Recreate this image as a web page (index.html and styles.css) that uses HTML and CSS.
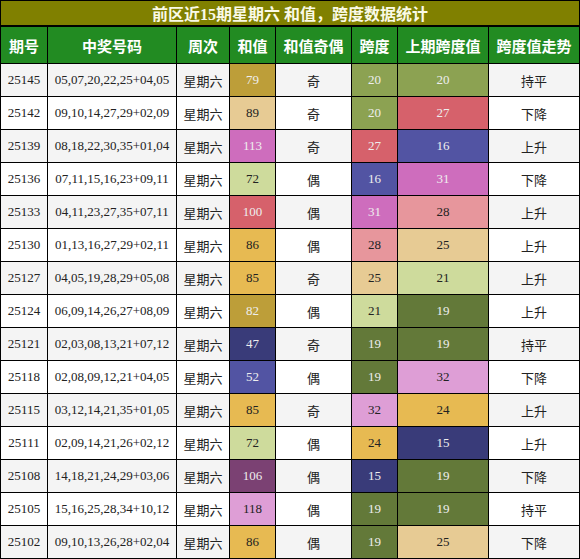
FILE: index.html
```html
<!DOCTYPE html>
<html lang="zh">
<head>
<meta charset="utf-8">
<link rel="stylesheet" href="styles.css">
</head>
<body>
<div class="grid">
  <div class="title">前区近15期星期六 和值，跨度数据统计</div>
  <div class="th">期号</div><div class="th">中奖号码</div><div class="th">周次</div><div class="th">和值</div><div class="th">和值奇偶</div><div class="th">跨度</div><div class="th">上期跨度值</div><div class="th">跨度值走势</div>

  <div class="td g">25145</div><div class="td g">05,07,20,22,25+04,05</div><div class="td g">星期六</div><div class="td c-bd9e39 lt">79</div><div class="td g">奇</div><div class="td c-8ca252 lt">20</div><div class="td c-8ca252 lt">20</div><div class="td g">持平</div>
  <div class="td">25142</div><div class="td">09,10,14,27,29+02,09</div><div class="td">星期六</div><div class="td c-e7cb94">89</div><div class="td">奇</div><div class="td c-8ca252 lt">20</div><div class="td c-d6616b lt">27</div><div class="td">下降</div>
  <div class="td g">25139</div><div class="td g">08,18,22,30,35+01,04</div><div class="td g">星期六</div><div class="td c-ce6dbd lt">113</div><div class="td g">奇</div><div class="td c-d6616b lt">27</div><div class="td c-5254a3 lt">16</div><div class="td g">上升</div>
  <div class="td">25136</div><div class="td">07,11,15,16,23+09,11</div><div class="td">星期六</div><div class="td c-cedb9c">72</div><div class="td">偶</div><div class="td c-5254a3 lt">16</div><div class="td c-ce6dbd lt">31</div><div class="td">下降</div>
  <div class="td g">25133</div><div class="td g">04,11,23,27,35+07,11</div><div class="td g">星期六</div><div class="td c-d6616b lt">100</div><div class="td g">偶</div><div class="td c-ce6dbd lt">31</div><div class="td c-e7969c">28</div><div class="td g">上升</div>
  <div class="td">25130</div><div class="td">01,13,16,27,29+02,11</div><div class="td">星期六</div><div class="td c-e7ba52">86</div><div class="td">偶</div><div class="td c-e7969c">28</div><div class="td c-e7cb94">25</div><div class="td">上升</div>
  <div class="td g">25127</div><div class="td g">04,05,19,28,29+05,08</div><div class="td g">星期六</div><div class="td c-e7ba52">85</div><div class="td g">奇</div><div class="td c-e7cb94">25</div><div class="td c-cedb9c">21</div><div class="td g">上升</div>
  <div class="td">25124</div><div class="td">06,09,14,26,27+08,09</div><div class="td">星期六</div><div class="td c-bd9e39 lt">82</div><div class="td">偶</div><div class="td c-cedb9c">21</div><div class="td c-637939 lt">19</div><div class="td">上升</div>
  <div class="td g">25121</div><div class="td g">02,03,08,13,21+07,12</div><div class="td g">星期六</div><div class="td c-393b79 lt">47</div><div class="td g">奇</div><div class="td c-637939 lt">19</div><div class="td c-637939 lt">19</div><div class="td g">持平</div>
  <div class="td">25118</div><div class="td">02,08,09,12,21+04,05</div><div class="td">星期六</div><div class="td c-5254a3 lt">52</div><div class="td">偶</div><div class="td c-637939 lt">19</div><div class="td c-de9ed6">32</div><div class="td">下降</div>
  <div class="td g">25115</div><div class="td g">03,12,14,21,35+01,05</div><div class="td g">星期六</div><div class="td c-e7ba52">85</div><div class="td g">奇</div><div class="td c-de9ed6">32</div><div class="td c-e7ba52">24</div><div class="td g">上升</div>
  <div class="td">25111</div><div class="td">02,09,14,21,26+02,12</div><div class="td">星期六</div><div class="td c-cedb9c">72</div><div class="td">偶</div><div class="td c-e7ba52">24</div><div class="td c-393b79 lt">15</div><div class="td">上升</div>
  <div class="td g">25108</div><div class="td g">14,18,21,24,29+03,06</div><div class="td g">星期六</div><div class="td c-7b4173 lt">106</div><div class="td g">偶</div><div class="td c-393b79 lt">15</div><div class="td c-637939 lt">19</div><div class="td g">下降</div>
  <div class="td">25105</div><div class="td">15,16,25,28,34+10,12</div><div class="td">星期六</div><div class="td c-de9ed6">118</div><div class="td">偶</div><div class="td c-637939 lt">19</div><div class="td c-637939 lt">19</div><div class="td">持平</div>
  <div class="td g">25102</div><div class="td g">09,10,13,26,28+02,04</div><div class="td g">星期六</div><div class="td c-e7ba52">86</div><div class="td g">偶</div><div class="td c-637939 lt">19</div><div class="td c-e7cb94">25</div><div class="td g">下降</div>
</div>
</body>
</html>
```
FILE: styles.css
```css
html, body {
  margin: 0;
  padding: 0;
  background: #fff;
}
.grid {
  display: grid;
  grid-template-columns: 47px 129px 53px 46px 76px 46px 91px 91px;
  grid-template-rows: 26px 37px repeat(15, 33px);
  width: 579px;
  border-left: 1px solid #000;
  border-top: 1px solid #000;
  font-family: "Liberation Serif", "Noto Sans CJK SC", serif;
  font-size: 13px;
  color: #222;
}
.title {
  grid-column: 1 / -1;
  background: #808000;
  color: #fafae6;
  font-weight: bold;
  font-size: 16px;
  display: flex;
  align-items: center;
  justify-content: center;
  border-right: 1px solid #000;
  border-bottom: 2px solid #000;
}
.th {
  background: #228b22;
  color: #fff;
  font-weight: bold;
  font-size: 15px;
  display: flex;
  align-items: center;
  justify-content: center;
  border-right: 1px solid #000;
  border-bottom: 1px solid #000;
}
.td {
  display: flex;
  align-items: center;
  justify-content: center;
  border-right: 1px solid #000;
  border-bottom: 1px solid #000;
  background: #fff;
}
.td.g { background: #f4f4f4; }
.lt { color: #eee; }
.c-bd9e39 { background: #bd9e39 !important; }
.c-8ca252 { background: #8ca252 !important; }
.c-e7cb94 { background: #e7cb94 !important; }
.c-d6616b { background: #d6616b !important; }
.c-ce6dbd { background: #ce6dbd !important; }
.c-5254a3 { background: #5254a3 !important; }
.c-cedb9c { background: #cedb9c !important; }
.c-e7969c { background: #e7969c !important; }
.c-e7ba52 { background: #e7ba52 !important; }
.c-637939 { background: #637939 !important; }
.c-393b79 { background: #393b79 !important; }
.c-de9ed6 { background: #de9ed6 !important; }
.c-7b4173 { background: #7b4173 !important; }
```
